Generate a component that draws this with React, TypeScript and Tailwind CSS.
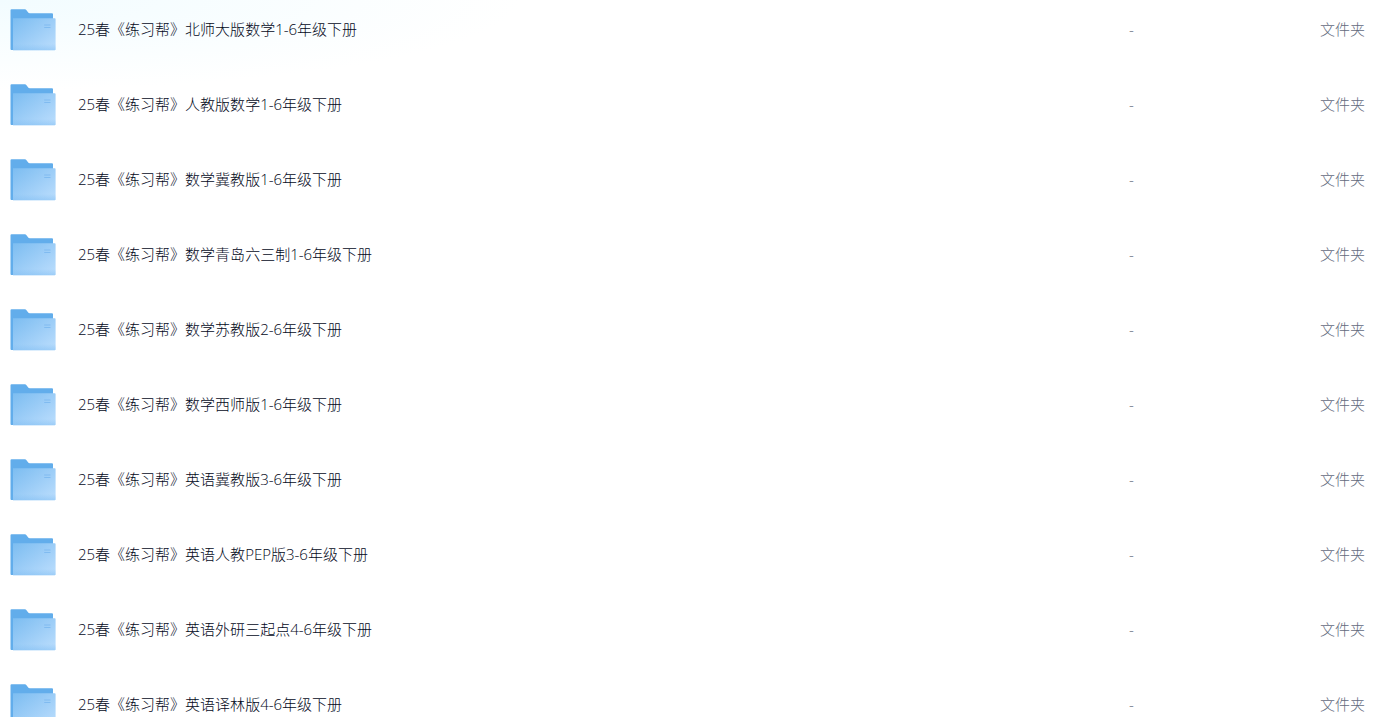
import React from 'react';

type FolderItem = {
  name: string;
  size: string;
  type: string;
};

const FOLDERS: FolderItem[] = [
  '25春《练习帮》北师大版数学1-6年级下册',
  '25春《练习帮》人教版数学1-6年级下册',
  '25春《练习帮》数学冀教版1-6年级下册',
  '25春《练习帮》数学青岛六三制1-6年级下册',
  '25春《练习帮》数学苏教版2-6年级下册',
  '25春《练习帮》数学西师版1-6年级下册',
  '25春《练习帮》英语冀教版3-6年级下册',
  '25春《练习帮》英语人教PEP版3-6年级下册',
  '25春《练习帮》英语外研三起点4-6年级下册',
  '25春《练习帮》英语译林版4-6年级下册'
].map((name) => ({ name, size: '-', type: '文件夹' }));

// Gradients are shared by every folder icon in the list.
function FolderGradients() {
  return (
    <svg className="absolute h-0 w-0" aria-hidden="true">
      <defs>
        <linearGradient id="folder-front" x1="0" y1="0" x2="1" y2="1">
          <stop offset="0" stopColor="#7cbdf1" />
          <stop offset="0.5" stopColor="#9ccdf7" />
          <stop offset="1" stopColor="#bcdefd" />
        </linearGradient>
        <linearGradient id="folder-shade" x1="0" y1="0" x2="0" y2="1">
          <stop offset="0" stopColor="#7dbcf2" stopOpacity="0" />
          <stop offset="1" stopColor="#7dbcf2" stopOpacity="0.5" />
        </linearGradient>
      </defs>
    </svg>
  );
}

function FolderIcon() {
  return (
    <svg viewBox="0 0 46 42" className="h-[42px] w-[46px] shrink-0" aria-hidden="true">
      <path d="M0.5 1.2Q0.5 0.3 1.5 0.3H14.8Q15.9 0.3 16.5 1.2L18.2 3.5Q18.7 4.2 19.8 4.2H42Q43 4.2 43 5.2V41H1.5Q0.5 41 0.5 40Z" fill="#62adeb" />
      <path d="M3 9.2H44.8Q45.6 9.2 45.6 10V40.2Q45.6 41.2 44.6 41.2H3Z" fill="url(#folder-front)" />
      <path d="M3 35H45.6V40.2Q45.6 41.2 44.6 41.2H3Z" fill="url(#folder-shade)" />
      <path d="M34.2 16H40.5M34.2 18.5H40.5" stroke="#80bbf0" strokeWidth="1" />
    </svg>
  );
}

export default function App() {
  return (
    <main className="h-screen overflow-hidden border-b-2 border-white bg-white bg-[radial-gradient(ellipse_520px_90px_at_0_0,#f2fcff,#ffffff)] font-['Open_Sans','Noto_Sans_CJK_SC',sans-serif] text-[15px] leading-6 font-light">
      <FolderGradients />
      {/* The list is scrolled a little past the top of its first row. */}
      <table className="-mt-2 w-full table-fixed border-collapse text-left">
        <colgroup>
          <col />
          <col className="w-[191px]" />
          <col className="w-[53px]" />
        </colgroup>
        <tbody>
          {FOLDERS.map((folder) =>
          <tr key={folder.name} className="h-[75px]">
              <td className="pl-2.5">
                <a href="#" className="flex items-center gap-[22px] text-[#03081a]">
                  <FolderIcon />
                  <span className="truncate pb-0.5">{folder.name}</span>
                </a>
              </td>
              <td className="pb-0.5 text-[#636a7d]">{folder.size}</td>
              <td className="pb-0.5 whitespace-nowrap text-[#636a7d]">{folder.type}</td>
            </tr>
          )}
        </tbody>
      </table>
    </main>);

}
